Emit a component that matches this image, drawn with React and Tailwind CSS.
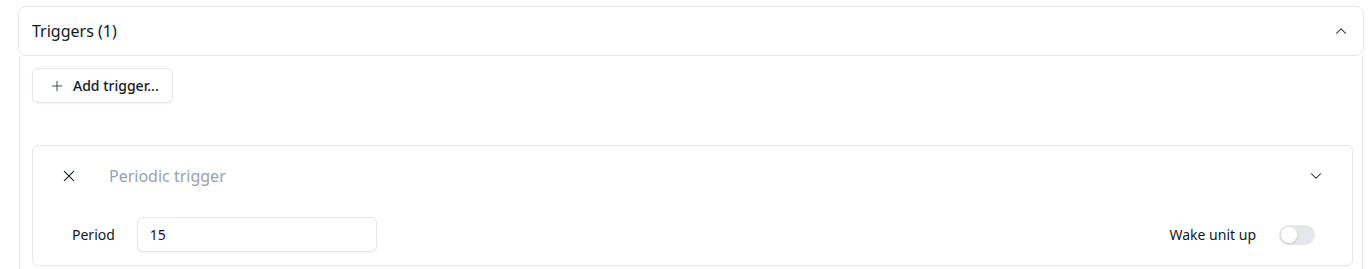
import React from "react";

export default function App() {
  return (
    <div className="w-[1371px] h-[269px] overflow-hidden bg-white pt-[6px] pl-[18px]" style={{ fontFamily: '"Noto Sans", sans-serif' }}>
      <div className="w-[1346px]">
        <div className="h-[50px] border border-gray-200 rounded-lg flex items-center justify-between pl-[13px] pr-[13px]">
          <span className="text-[16px] text-gray-900">Triggers (1)</span>
          <svg width="18" height="18" viewBox="0 0 24 24" fill="none" stroke="#111827" strokeWidth="1.4" strokeLinecap="round" strokeLinejoin="round"><path d="M6 15l6-6 6 6" /></svg>
        </div>
        <div className="mx-px border-x border-gray-200 h-[250px] pl-[12px] pr-[10px] pt-[12px]">
          <button className="h-[35px] w-[141px] border border-gray-200 rounded-md flex items-center pl-[17px] gap-[9px] text-[14px] font-medium text-gray-900 shadow-xs">
            <svg width="14" height="14" viewBox="0 0 24 24" fill="none" stroke="#374151" strokeWidth="1.6" strokeLinecap="round"><path d="M12 4v16M4 12h16" /></svg>
            Add trigger...
          </button>
          <div className="mt-[42px] w-[1321px] h-[121px] border border-gray-200 rounded-md">
            <div className="h-[60px] flex items-center pl-[28px] pr-[27px]">
              <svg width="16" height="16" viewBox="0 0 24 24" fill="none" stroke="#111827" strokeWidth="1.6" strokeLinecap="round"><path d="M5 5l14 14M19 5L5 19" /></svg>
              <span className="ml-[32px] text-[16px] text-gray-400">Periodic trigger</span>
              <div className="flex-1" />
              <svg width="18" height="18" viewBox="0 0 24 24" fill="none" stroke="#111827" strokeWidth="1.4" strokeLinecap="round" strokeLinejoin="round"><path d="M6 9l6 6 6-6" /></svg>
            </div>
            <div className="flex items-center pl-[39px] pr-[37px] mt-[11px]">
              <span className="text-[14px] text-gray-900">Period</span>
              <div className="ml-[22px] w-[240px] h-[35px] border border-gray-200 rounded-md flex items-center pl-[12px] text-[14px] text-gray-900 shadow-xs">15</div>
              <div className="flex-1" />
              <span className="text-[14px] text-gray-900">Wake unit up</span>
              <div className="ml-[23px] w-[36px] h-[20px] rounded-full bg-gray-200 p-[2px] flex items-center">
                <div className="w-[16px] h-[16px] rounded-full bg-white shadow" />
              </div>
            </div>
          </div>
        </div>
      </div>
    </div>
  );
}
